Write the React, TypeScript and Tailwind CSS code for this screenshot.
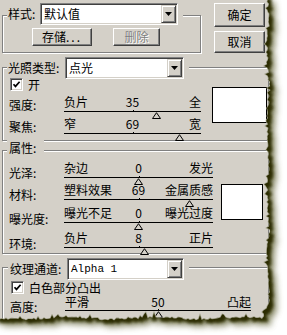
import React from 'react';

function makeEdge(): string {
  let s = 424242;
  const r = () => {
    s = (s * 16807) % 2147483647;
    return s / 2147483647;
  };
  const pts: string[] = [];
  pts.push('-20,-20');
  for (let y = -6; y <= 318; y += 2) {
    let x = 267.5 + Math.sin(y * 0.09) * 1.0 + (r() - 0.5) * 2.2;
    if (r() < 0.12) x -= 1.5 + r() * 2.5;
    if (y > 298) x -= ((y - 298) * (y - 298)) / 70;
    pts.push(`${x.toFixed(1)},${y}`);
  }
  for (let x = 260; x >= -20; x -= 2) {
    let y = 317.5 + Math.sin(x * 0.07) * 1.2 + (r() - 0.5) * 2.2;
    if (r() < 0.14) y -= 1.5 + r() * 3.5;
    pts.push(`${x},${y.toFixed(1)}`);
  }
  return 'M' + pts.join('L') + 'Z';
}

const EDGE = makeEdge();

function TornEdge() {
  return (
    <svg className="pointer-events-none absolute left-0 top-0" width="287" height="335" viewBox="0 0 287 335">
      <defs>
        <mask id="outside" maskUnits="userSpaceOnUse" x="0" y="0" width="287" height="335">
          <rect x="0" y="0" width="287" height="335" fill="#fff" />
          <path d={EDGE} fill="#000" />
        </mask>
        <filter id="b1" x="-10%" y="-10%" width="120%" height="120%">
          <feGaussianBlur stdDeviation="1.6" />
        </filter>
        <filter id="b2" x="-10%" y="-10%" width="120%" height="120%">
          <feGaussianBlur stdDeviation="3.2" />
        </filter>
      </defs>
      <g mask="url(#outside)">
        <rect x="0" y="0" width="287" height="335" fill="#fff" />
        <path d={EDGE} transform="translate(8,8)" fill="#5f6030" opacity="0.75" filter="url(#b2)" />
        <path d={EDGE} transform="translate(4.5,4.5)" fill="#2a2b06" filter="url(#b1)" />
        <path d={EDGE} fill="none" stroke="#efeee6" strokeWidth="1.4" opacity="0.55" />
      </g>
    </svg>
  );
}

function DropBtn() {
  return (
    <div className="ml-auto flex h-[18px] w-[15px] items-center justify-center border border-t-[#d4d0c8] border-l-[#d4d0c8] border-r-[#404040] border-b-[#404040] bg-[#d4d0c8] shadow-[inset_1px_1px_0_#fff,inset_-1px_-1px_0_#808080]">
      <svg width="7" height="4" viewBox="0 0 7 4">
        <path d="M0 0h7L3.5 4z" fill="#000" />
      </svg>
    </div>
  );
}

function Select({ wCls, children, mono }: { wCls: string; children: React.ReactNode; mono?: boolean }) {
  return (
    <div
      className={`flex h-[22px] items-center border border-t-[#808080] border-l-[#808080] border-r-white border-b-white bg-white p-[1px] shadow-[inset_1px_1px_0_#404040,inset_-1px_-1px_0_#d4d0c8] ${wCls}`}
    >
      <span
        className={
          mono
            ? "pl-[2px] font-['Liberation_Mono',monospace] text-[11px] leading-[18px]"
            : 'pl-[2px] leading-[18px]'
        }
      >
        {children}
      </span>
      <DropBtn />
    </div>
  );
}

function Btn({ cls, children, disabled }: { cls: string; children: React.ReactNode; disabled?: boolean }) {
  return (
    <div
      className={`flex items-center justify-center border border-t-white border-l-white border-r-[#404040] border-b-[#404040] bg-[#d4d0c8] shadow-[inset_-1px_-1px_0_#808080] ${cls} ${
        disabled ? 'text-[#808080] [text-shadow:1px_1px_0_#fff]' : 'text-black'
      }`}
    >
      {children}
    </div>
  );
}

function Check({ label, textCls }: { label: string; textCls: string }) {
  return (
    <div className="flex h-[13px] items-center">
      <div className="flex h-[13px] w-[13px] items-center justify-center border border-t-[#808080] border-l-[#808080] border-r-white border-b-white bg-white shadow-[inset_1px_1px_0_#404040,inset_-1px_-1px_0_#d4d0c8]">
        <svg width="9" height="9" viewBox="0 0 9 9">
          <path d="M1.5 4.2 L3.5 6.4 L7.6 1.8" fill="none" stroke="#000" strokeWidth="1.7" />
        </svg>
      </div>
      <span className={`leading-[13px] ${textCls}`}>{label}</span>
    </div>
  );
}

function SliderRow({
  label,
  labelCls,
  sliderCls,
  rowCls,
  textPt = 'pt-[3px]',
  left,
  mid,
  right,
  pos,
}: {
  label: string;
  labelCls: string;
  sliderCls: string;
  rowCls: string;
  textPt?: string;
  left: string;
  mid: string;
  right: string;
  pos: number;
}) {
  return (
    <div className={`flex ${rowCls}`}>
      <div className={`leading-[12px] ${labelCls}`}>{label}</div>
      <div className={`relative ${sliderCls}`}>
        <div className={`grid h-[18px] grid-cols-[1fr_auto_1fr] leading-[12px] ${textPt}`}>
          <span className="text-left">{left}</span>
          <span>{mid}</span>
          <span className="text-right">{right}</span>
        </div>
        <div className="relative h-px bg-black">
          <div className="absolute left-1/2 top-[-1px] h-px w-px bg-black" />
        </div>
        <svg
          className="absolute top-[19px]"
          style={{ left: `calc(${pos * 100}% - 4.5px)` }}
          width="9"
          height="7"
          viewBox="0 0 9 7"
        >
          <path d="M4.5 0.7 L8.5 6.5 L0.5 6.5 Z" fill="#d4d0c8" stroke="#000" strokeWidth="1" />
        </svg>
      </div>
    </div>
  );
}

const groupCls =
  'border border-[#808080] shadow-[inset_1px_1px_0_#fff,1px_1px_0_#fff]';

export default function App() {
  return (
    <div className="relative h-[335px] w-[287px] overflow-hidden bg-[#d4d0c8] font-['Noto_Sans_CJK_SC',sans-serif] text-[12px] text-black">
      {/* top section */}
      <div className="flex h-[53px] items-start">
        <div className={`ml-[2px] mt-[15px] h-[38px] w-[199px] ${groupCls}`}>
          <div className="ml-[4px] mt-[-13px] flex w-fit items-center bg-[#d4d0c8] pr-[5px]">
            <span className="w-[33px] pl-[1px] leading-[18px]">样式:</span>
            <Select wCls="w-[138px]">默认值</Select>
          </div>
          <div className="ml-[29px] mt-[3px] flex">
            <Btn cls="h-[18px] w-[60px]">
              存储<span className="tracking-[2px]">...</span>
            </Btn>
            <Btn cls="ml-[21px] h-[18px] w-[47px]" disabled>
              删除
            </Btn>
          </div>
        </div>
        <div className="ml-[13px] mt-[3px] flex flex-col">
          <Btn cls="h-[24px] w-[51px]">确定</Btn>
          <Btn cls="mt-[4px] h-[22px] w-[51px]">取消</Btn>
        </div>
      </div>

      {/* lighting type */}
      <div className={`ml-[2px] mt-[14px] h-[74px] w-[267px] ${groupCls}`}>
        <div className="ml-[4px] mt-[-11px] flex w-fit items-center bg-[#d4d0c8] pr-[5px]">
          <span className="w-[58px] pl-[1px] leading-[18px]">光照类型:</span>
          <Select wCls="w-[119px]">点光</Select>
        </div>
        <div className="flex items-start">
          <div className="flex w-[198px] flex-col">
            <div className="ml-[7px] mt-[-1px]">
              <Check label="开" textCls="ml-[5px]" />
            </div>
            <SliderRow
              rowCls="mt-[2px] h-[22px]"
              label="强度:"
              labelCls="w-[61px] pl-[6px] pt-[6px]"
              sliderCls="w-[137px]"
              left="负片"
              mid="35"
              right="全"
              pos={0.675}
            />
            <SliderRow
              rowCls="h-[22px]"
              label="聚焦:"
              labelCls="w-[61px] pl-[6px] pt-[6px]"
              sliderCls="w-[137px]"
              left="窄"
              mid="69"
              right="宽"
              pos={0.845}
            />
          </div>
          <div className="ml-[11px] mt-[8px] h-[36px] w-[55px] border border-black bg-white" />
        </div>
      </div>

      {/* properties */}
      <div className={`ml-[2px] mt-[9px] h-[104px] w-[267px] ${groupCls}`}>
        <div className="ml-[4px] mt-[-11px] h-[16px] w-[37px] bg-[#d4d0c8] pl-[2px] leading-[16px]">属性:</div>
        <div className="flex items-start">
          <div className="flex w-[210px] flex-col">
            <SliderRow
              rowCls="mt-[3px] h-[22px]"
              label="光泽:"
              labelCls="w-[61px] pl-[6px] pt-[8px]"
              sliderCls="w-[149px]"
              left="杂边"
              mid="0"
              right="发光"
              pos={0.5}
            />
            <SliderRow
              rowCls="h-[23px]"
              label="材料:"
              labelCls="w-[61px] pl-[6px] pt-[8px]"
              sliderCls="w-[149px]"
              left="塑料效果"
              mid="69"
              right="金属质感"
              pos={0.845}
            />
            <SliderRow
              rowCls="h-[25px]"
              label="曝光度:"
              labelCls="w-[61px] pl-[6px] pt-[9px]"
              sliderCls="w-[149px]"
              left="曝光不足"
              mid="0"
              right="曝光过度"
              pos={0.5}
            />
            <SliderRow
              rowCls="h-[22px]"
              label="环境:"
              labelCls="w-[61px] pl-[6px] pt-[9px]"
              sliderCls="w-[149px]"
              left="负片"
              mid="8"
              right="正片"
              pos={0.54}
            />
          </div>
          <div className="ml-[8px] mt-[28px] h-[36px] w-[42px] border border-black bg-white" />
        </div>
      </div>

      {/* texture channel */}
      <div className={`ml-[2px] mt-[13px] h-[80px] w-[267px] ${groupCls}`}>
        <div className="ml-[5px] mt-[-10px] flex w-fit items-center bg-[#d4d0c8] pr-[5px]">
          <span className="w-[59px] pl-[2px] leading-[18px]">纹理通道:</span>
          <Select wCls="w-[117px]" mono>
            Alpha 1
          </Select>
        </div>
        <div className="ml-[8px] mt-[1px]">
          <Check label="白色部分凸出" textCls="ml-[5px]" />
        </div>
        <SliderRow
          rowCls="mt-[-2px] h-[22px]"
          textPt="pt-[4px]"
          label="高度:"
          labelCls="w-[62px] pl-[7px] pt-[9px]"
          sliderCls="w-[186px]"
          left="平滑"
          mid="50"
          right="凸起"
          pos={0.5}
        />
      </div>

      <TornEdge />
    </div>
  );
}
